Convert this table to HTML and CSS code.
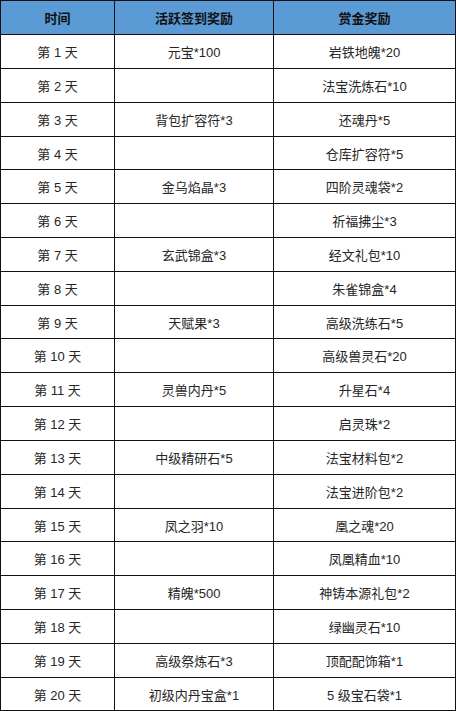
FILE: index.html
```html
<!DOCTYPE html>
<html lang="zh-CN">
<head>
<meta charset="utf-8">
<link rel="stylesheet" href="styles.css">
</head>
<body>
<div class="table">
  <div class="cell head">时间</div><div class="cell head">活跃签到奖励</div><div class="cell head">赏金奖励</div>
  <div class="cell">第 1 天</div><div class="cell">元宝*100</div><div class="cell">岩铁地魄*20</div>
  <div class="cell">第 2 天</div><div class="cell"></div><div class="cell">法宝洗炼石*10</div>
  <div class="cell">第 3 天</div><div class="cell">背包扩容符*3</div><div class="cell">还魂丹*5</div>
  <div class="cell">第 4 天</div><div class="cell"></div><div class="cell">仓库扩容符*5</div>
  <div class="cell">第 5 天</div><div class="cell">金乌焰晶*3</div><div class="cell">四阶灵魂袋*2</div>
  <div class="cell">第 6 天</div><div class="cell"></div><div class="cell">祈福拂尘*3</div>
  <div class="cell">第 7 天</div><div class="cell">玄武锦盒*3</div><div class="cell">经文礼包*10</div>
  <div class="cell">第 8 天</div><div class="cell"></div><div class="cell">朱雀锦盒*4</div>
  <div class="cell">第 9 天</div><div class="cell">天赋果*3</div><div class="cell">高级洗练石*5</div>
  <div class="cell">第 10 天</div><div class="cell"></div><div class="cell">高级兽灵石*20</div>
  <div class="cell">第 11 天</div><div class="cell">灵兽内丹*5</div><div class="cell">升星石*4</div>
  <div class="cell">第 12 天</div><div class="cell"></div><div class="cell">启灵珠*2</div>
  <div class="cell">第 13 天</div><div class="cell">中级精研石*5</div><div class="cell">法宝材料包*2</div>
  <div class="cell">第 14 天</div><div class="cell"></div><div class="cell">法宝进阶包*2</div>
  <div class="cell">第 15 天</div><div class="cell">凤之羽*10</div><div class="cell">凰之魂*20</div>
  <div class="cell">第 16 天</div><div class="cell"></div><div class="cell">凤凰精血*10</div>
  <div class="cell">第 17 天</div><div class="cell">精魄*500</div><div class="cell">神铸本源礼包*2</div>
  <div class="cell">第 18 天</div><div class="cell"></div><div class="cell">绿幽灵石*10</div>
  <div class="cell">第 19 天</div><div class="cell">高级祭炼石*3</div><div class="cell">顶配配饰箱*1</div>
  <div class="cell">第 20 天</div><div class="cell">初级内丹宝盒*1</div><div class="cell">5 级宝石袋*1</div>
</div>
</body>
</html>
```

FILE: styles.css
```css
html, body {
  margin: 0;
  padding: 0;
  background: #fff;
}

.table {
  width: 456px;
  box-sizing: border-box;
  display: grid;
  grid-template-columns: 113px 158px 181px;
  grid-template-rows:
    33px 33px 33px 33px 32px 33px 33px 33px 33px 32px
    33px 33px 33px 33px 33px 32px 33px 33px 33px 33px 32px;
  gap: 1px;
  padding: 1px;
  background: #111;
  font-family: "Liberation Sans", "Noto Sans CJK SC", sans-serif;
  font-size: 13px;
  color: #262626;
}

.cell {
  background: #fff;
  display: flex;
  align-items: center;
  justify-content: center;
  white-space: nowrap;
}

.cell.head {
  background: #5b9bd5;
  color: #111;
  font-weight: bold;
}
```
